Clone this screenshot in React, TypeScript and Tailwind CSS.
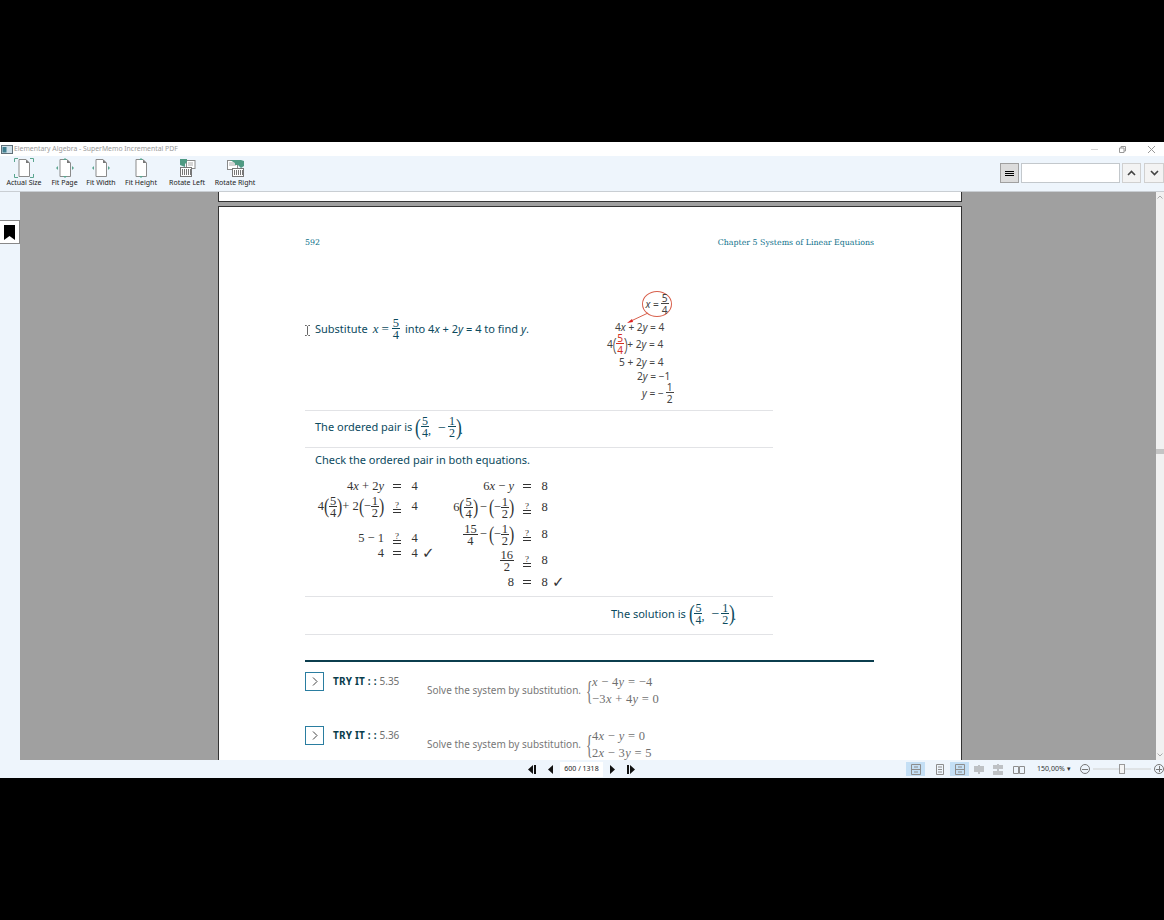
import React from "react";

const serif = "font-['Liberation_Serif',serif]";
const sans = "font-['Noto_Sans',sans-serif]";

function Frac({ n, d, cls = "" }: { n: string; d: string; cls?: string }) {
  return (
    <span className={`inline-flex flex-col items-center align-middle leading-[10px] ${cls}`}>
      <span className="px-[1px]">{n}</span>
      <span className="block h-[1px] w-full bg-current" />
      <span className="px-[1px] pt-[1px]">{d}</span>
    </span>
  );
}

function Paren({ children, h = "text-[21px]" }: { children: React.ReactNode; h?: string }) {
  return (
    <span className="inline-flex items-center">
      <span className={`${h} leading-none font-light scale-x-75 mx-[-1px]`}>(</span>
      {children}
      <span className={`${h} leading-none font-light scale-x-75 mx-[-1px]`}>)</span>
    </span>
  );
}

function PageIcon({ arrows }: { arrows: "all" | "h" | "v" | "corners" }) {
  const g = "#5aa58f";
  return (
    <svg width="22" height="20" viewBox="0 0 22 20">
      <path d="M6 1.500h7l3.500 3.500v13.500H6z" fill="#fff" stroke="#8b8b8b" />
      <path d="M13 1.500V5h3.500z" fill="#777" />
      {arrows === "corners" && (
        <path d="M1.500 4V.5H5M17 .5h3.500V4M1.500 16v3.500H5M17 19.500h3.500V16" fill="none" stroke={g} />
      )}
      {(arrows === "all" || arrows === "v") && <path d="M11 0l2 2H9zM11 20l2-2H9z" fill={g} />}
      {(arrows === "all" || arrows === "h") && <path d="M2 10l2-2v4zM20 10l-2-2v4z" fill={g} />}
    </svg>
  );
}

function RotateLeft() {
  return (
    <svg width="17" height="18" viewBox="0 0 17 18">
      <rect x="7.500" y="1.500" width="8.500" height="8" fill="#fff" stroke="#8a8a8a" />
      <path d="M9 4h5M9 6h5" stroke="#aaa" />
      <path d="M1 0h7v3l-2 2v3L1 6z" fill="#4f9a83" />
      <rect x="1.500" y="8.500" width="11" height="9" fill="#fff" stroke="#777" />
      <path d="M3.500 10v6M5.500 10v6M7.500 10v6M9.500 10v6M11.500 10v6" stroke="#777" />
    </svg>
  );
}

function RotateRight() {
  return (
    <svg width="17" height="18" viewBox="0 0 17 18">
      <rect x=".5" y="1.500" width="10" height="9" fill="#fff" stroke="#8a8a8a" />
      <path d="M2 4h7M2 6h7" stroke="#aaa" />
      <path d="M3 1h11l3 1v5l-3 2-3-3H8V4z" fill="#4f9a83" />
      <rect x="5.500" y="9.500" width="11" height="8" fill="#fff" stroke="#777" />
      <path d="M7.500 11v5M9.500 11v5M11.500 11v5M13.500 11v5M15.500 11v5" stroke="#777" />
    </svg>
  );
}

function Tool({ label, icon, w }: { label: string; icon: React.ReactNode; w: string }) {
  return (
    <div className={`flex flex-col items-center ${w}`}>
      <div className="h-[20px] flex items-center justify-center">{icon}</div>
      <span className="text-[7px] leading-[9px] text-[#222] whitespace-nowrap">{label}</span>
    </div>
  );
}

function StatusIcon({ active, kind, cls = "" }: { active?: boolean; kind: number; cls?: string }) {
  return (
    <div className={`w-[19px] h-[14px] flex items-center justify-center ${active ? "bg-[#c4dff5]" : ""} ${cls}`}>
      <svg width="12" height="11" viewBox="0 0 12 11" fill="none" stroke="#8d8d8d">
        {kind === 0 && <path d="M1.500.5h9v10h-9zM1.500 5.500h9M4 3h4M4 8h4" />}
        {kind === 1 && <path d="M2.500.5h7v10h-7zM4 3h4M4 5.500h4M4 8h4" />}
        {kind === 2 && <path d="M1 5h4M1 3h4M1 7h4M7 3h4M7 5h4M7 7h4M6 1v9" />}
        {kind === 3 && <path d="M1 2h4M1 4h4M7 2h4M7 4h4M1 8h4M1 10h4M7 8h4M7 10h4M6 0v11" />}
        {kind === 4 && <path d="M.5 2.500h5v7h-5zM6.500 2.500h5v7h-5z" />}
      </svg>
    </div>
  );
}

function EqRow({ l, op, r, check, h, w }: { l: React.ReactNode; op: React.ReactNode; r: string; check?: boolean; h: string; w: string }) {
  return (
    <div className={`flex items-center ${h}`}>
      <div className={`${w} flex justify-end items-center whitespace-nowrap`}>{l}</div>
      <div className="w-[26px] flex justify-center">{op}</div>
      <div className="w-[9px] text-center">{r}</div>
      {check && <span className="ml-[3px] text-[15px] font-bold leading-none font-['DejaVu_Sans',sans-serif]">✓</span>}
    </div>
  );
}

const Eq = () => (
  <span className="flex flex-col gap-[2px]">
    <span className="block w-[8px] h-[1px] bg-current" />
    <span className="block w-[8px] h-[1px] bg-current" />
  </span>
);

const Q = () => (
  <span className="inline-flex flex-col items-center">
    <span className="text-[9px] leading-[8px]">?</span>
    <Eq />
  </span>
);

function Pair() {
  return (
    <span className={`${serif} inline-flex items-center text-[12px]`}>
      <Paren h="text-[23px]">
        <Frac n="5" d="4" />
        <span className="ml-[-1px] mr-[7px] self-end">,</span>
        <span className="mr-[2px] text-[14px]">−</span>
        <Frac n="1" d="2" />
      </Paren>
      <span className="ml-[-2px] self-end">.</span>
    </span>
  );
}

function TryIt({ num, a, b, mt }: { num: string; a: React.ReactNode; b: React.ReactNode; mt: string }) {
  return (
    <div className={`flex ${mt}`}>
      <div className="w-[19px] h-[19px] border border-[#2a7da0] flex items-center justify-center shrink-0">
        <svg width="6" height="9" viewBox="0 0 6 9" fill="none" stroke="#444">
          <path d="M1 .5l4 4-4 4" />
        </svg>
      </div>
      <div className={`${sans} ml-[9px] w-[94px] text-[10px] leading-[18px] whitespace-nowrap`}>
        <span className="font-bold text-[#093d4c] tracking-[0.2px]">TRY IT : : </span>
        <span className="text-[#6f6f6f]">{num}</span>
      </div>
      <div className={`${sans} text-[10px] text-[#777] mt-[9px] whitespace-nowrap leading-[18px]`}>
        Solve the system by substitution.
      </div>
      <div className={`${serif} ml-[3px] flex items-center text-[12.5px] tracking-[0.3px] text-[#6f6f6f] h-[36px] mt-[1px]`}>
        <span className="text-[27px] font-thin leading-none scale-x-50 w-[8px]">{"{"}</span>
        <div className="leading-[17.5px] whitespace-nowrap">
          <div>{a}</div>
          <div>{b}</div>
        </div>
      </div>
    </div>
  );
}

export default function App() {
  return (
    <div className={`${sans} w-[1164px] h-[920px] bg-black overflow-hidden flex flex-col`}>
      <div className="h-[142px] shrink-0" />

      {/* Title bar */}
      <div className="h-[14px] shrink-0 bg-white flex items-center pl-[1px]">
        <svg width="12" height="9" viewBox="0 0 12 9">
          <rect x=".5" y=".5" width="11" height="8" fill="#cfe0ea" stroke="#5f6f78" />
          <rect x="1.500" y="2" width="4" height="5.500" fill="#3f7f8f" />
        </svg>
        <span className="ml-[1px] text-[6.85px] text-[#9a9a9a] whitespace-nowrap">
          Elementary Algebra - SuperMemo Incremental PDF
        </span>
        <div className="ml-auto flex items-center">
          <span className="w-[7px] h-[1px] bg-[#d5d5d5] mr-[21px]" />
          <svg width="7" height="7" viewBox="0 0 7 7" fill="none" stroke="#999" className="mr-[21px]">
            <path d="M.5 2h4.500v4.500h-4.500zM2 2V.5h4.500V5H5" />
          </svg>
          <svg width="9" height="9" viewBox="0 0 9 9" stroke="#999" className="mr-[8px]">
            <path d="M1 1l7 7M8 1L1 8" />
          </svg>
        </div>
      </div>

      {/* Toolbar */}
      <div className="h-[36px] shrink-0 bg-[#eef5fc] border-b border-[#c9ced3] flex items-start pt-[2px]">
        <Tool label="Actual Size" w="w-[48px]" icon={<PageIcon arrows="corners" />} />
        <Tool label="Fit Page" w="w-[33px]" icon={<PageIcon arrows="all" />} />
        <Tool label="Fit Width" w="w-[40px]" icon={<PageIcon arrows="h" />} />
        <Tool label="Fit Height" w="w-[40px]" icon={<PageIcon arrows="v" />} />
        <Tool label="Rotate Left" w="w-[40px] ml-[6px]" icon={<RotateLeft />} />
        <Tool label="Rotate Right" w="w-[44px] ml-[6px]" icon={<RotateRight />} />
        <div className="ml-auto flex items-center mt-[5px]">
          <div className="w-[19px] h-[20px] bg-[#dcdcdc] border border-[#a0a0a0] flex flex-col items-center justify-center gap-[1px]">
            <span className="w-[9px] h-[1px] bg-black" />
            <span className="w-[9px] h-[1px] bg-black" />
            <span className="w-[9px] h-[1px] bg-black" />
          </div>
          <div className="w-[99px] h-[20px] ml-[2px] bg-white border border-[#c3c8cc]" />
          <div className="w-[19px] h-[20px] ml-[2px] bg-[#f3f3f3] border border-[#d0d0d0] flex items-center justify-center">
            <svg width="9" height="6" viewBox="0 0 9 6" fill="none" stroke="#444" strokeWidth="1.6"><path d="M1 5l3.500-3.500L8 5" /></svg>
          </div>
          <div className="w-[20px] h-[20px] ml-[3px] bg-[#f3f3f3] border border-[#d0d0d0] flex items-center justify-center">
            <svg width="9" height="6" viewBox="0 0 9 6" fill="none" stroke="#444" strokeWidth="1.6"><path d="M1 1l3.500 3.500L8 1" /></svg>
          </div>
        </div>
      </div>

      {/* Main */}
      <div className="h-[568px] shrink-0 flex overflow-hidden">
        <div className="w-[20px] shrink-0 bg-[#eef5fc] pt-[28px]">
          <div className="w-[20px] h-[24px] bg-white border border-[#888] border-l-0 flex items-center justify-center">
            <svg width="11" height="15" viewBox="0 0 11 15"><path d="M0 0h11v15l-5.500-4L0 15z" fill="#000" /></svg>
          </div>
        </div>
        <div className="flex-1 bg-[#a0a0a0] pl-[198px] overflow-hidden">
          <div className="w-[744px] h-[10px] bg-white border border-t-0 border-[#333]" />
          <div className="w-[744px] h-[600px] mt-[4px] bg-white border border-[#333] pl-[86px] pt-[30px] text-[#0b4a5e]">
            {/* Header */}
            <div className="w-[569px] flex justify-between font-['DejaVu_Serif',serif] text-[7.85px] leading-[11px] text-[#0b6f8a]">
              <span>592</span>
              <span>Chapter 5 Systems of Linear Equations</span>
            </div>

            {/* Step 1 */}
            <div className="relative w-[468px] h-[157px] mt-[6px] border-b border-[#e2e3e6]">
              <svg className="absolute left-0 top-[71px]" width="5" height="11" viewBox="0 0 5 11" fill="none" stroke="#666">
                <path d="M0 .5h1.500L2.500 1.500 3.500.5H5M2.500 1.500v8M0 10.500h1.500l1-1 1 1H5" />
              </svg>
              <div className="absolute left-[10px] top-[64px] flex items-center text-[11px] leading-[20px] whitespace-nowrap">
                <span>Substitute</span>
                <span className={`${serif} italic text-[13px] ml-[5px]`}>x</span>
                <span className={`${serif} text-[13px] mx-[3px]`}>=</span>
                <Frac n="5" d="4" cls={`${serif} text-[12.5px]`} />
                <span className="ml-[5px]">into 4<i>x</i> + 2<i>y</i> = 4 to find <i>y</i>.</span>
              </div>
              <div className="absolute left-[302px] top-[39px] text-[#444] text-[10.2px] leading-[17px] whitespace-nowrap w-[70px] h-[120px]">
                <div className="absolute left-[35px] top-[-2px] w-[30px] h-[26px] rounded-[50%] border border-[#d8604c] flex items-center justify-center gap-[2px]">
                  <span><i>x</i> =</span>
                  <Frac n="5" d="4" />
                </div>
                <svg className="absolute left-[20px] top-[19px]" width="22" height="12" viewBox="0 0 22 12">
                  <path d="M21 1L4 9" stroke="#d8604c" fill="none" />
                  <path d="M0 11l5-4 1 3z" fill="#d22" />
                </svg>
                <div className="absolute left-[8px] top-[26px]">4<i>x</i> + 2<i>y</i> = 4</div>
                <div className="absolute left-0 top-[40px] flex items-center">
                  <span>4</span>
                  <Paren h="text-[19px]">
                    <Frac n="5" d="4" cls="text-[#d32f1f]" />
                  </Paren>
                  <span>+ 2<i>y</i> = 4</span>
                </div>
                <div className="absolute left-[12px] top-[61px]">5 + 2<i>y</i> = 4</div>
                <div className="absolute left-[30px] top-[75px]">2<i>y</i> = −1</div>
                <div className="absolute left-[35px] top-[89px] flex items-center gap-[2px]">
                  <span><i>y</i> = −</span>
                  <Frac n="1" d="2" />
                </div>
              </div>
            </div>

            {/* ordered pair */}
            <div className="w-[468px] h-[37px] border-b border-[#e2e3e6] pl-[10px] pb-[3px] flex items-center text-[11px] whitespace-nowrap">
              <span>The ordered pair is</span>
              <span className="ml-[3px]"><Pair /></span>
            </div>

            {/* Check */}
            <div className="w-[468px] h-[149px] border-b border-[#e2e3e6] pl-[10px] pt-[3px]">
              <div className="text-[11px] leading-[18px]">Check the ordered pair in both equations.</div>
              <div className={`${serif} flex text-[12.5px] text-[#333] mt-[9px]`}>
                <div className="ml-[-8px] w-[130px]">
                  <EqRow w="w-[77px]" h="h-[16px]" l={<span>4<i>x</i> + 2<i>y</i></span>} op={<Eq />} r="4" />
                  <EqRow w="w-[77px]" h="h-[25px]" l={<span className="flex items-center"><span>4</span><Paren><Frac n="5" d="4" /></Paren><span>+ 2</span><Paren><span>−</span><Frac n="1" d="2" /></Paren></span>} op={<Q />} r="4" />
                  <EqRow w="w-[77px]" h="h-[28px] pt-[10px]" l="5 − 1" op={<Q />} r="4" />
                  <EqRow w="w-[77px]" h="h-[12px]" l="4" op={<Eq />} r="4" check />
                </div>
                <div className="ml-[7px]">
                  <EqRow w="w-[70px]" h="h-[16px]" l={<span>6<i>x</i> − <i>y</i></span>} op={<Eq />} r="8" />
                  <EqRow w="w-[70px]" h="h-[27px]" l={<span className="flex items-center"><span>6</span><Paren><Frac n="5" d="4" /></Paren><span className="mx-[2px]">−</span><Paren><span>−</span><Frac n="1" d="2" /></Paren></span>} op={<Q />} r="8" />
                  <EqRow w="w-[70px]" h="h-[27px]" l={<span className="flex items-center"><Frac n="15" d="4" /><span className="mx-[2px]">−</span><Paren><span>−</span><Frac n="1" d="2" /></Paren></span>} op={<Q />} r="8" />
                  <EqRow w="w-[70px]" h="h-[25px]" l={<Frac n="16" d="2" />} op={<Q />} r="8" />
                  <EqRow w="w-[70px]" h="h-[18px]" l="8" op={<Eq />} r="8" check />
                </div>
              </div>
            </div>

            {/* Solution */}
            <div className="w-[468px] h-[38px] border-b border-[#e2e3e6] pr-[37px] pb-[3px] flex items-center justify-end text-[11px] whitespace-nowrap">
              <span>The solution is</span>
              <span className="ml-[3px]"><Pair /></span>
            </div>

            <div className="w-[569px] h-[2px] bg-[#0b3d4d] mt-[25px]" />

            <TryIt mt="mt-[10px]" num="5.35" a={<><i>x</i> − 4<i>y</i> = −4</>} b={<>−3<i>x</i> + 4<i>y</i> = 0</>} />
            <TryIt mt="mt-[17px]" num="5.36" a={<>4<i>x</i> − <i>y</i> = 0</>} b={<>2<i>x</i> − 3<i>y</i> = 5</>} />
          </div>
        </div>
        {/* Scrollbar */}
        <div className="w-[8px] shrink-0 bg-[#f1f1f1] flex flex-col items-center py-[3px]">
          <svg width="6" height="4" viewBox="0 0 6 4" fill="none" stroke="#aaa"><path d="M.5 3.500L3 1l2.500 2.500" /></svg>
          <div className="w-[8px] h-[5px] mt-[250px] bg-[#c4c4c4]" />
          <svg className="mt-auto" width="6" height="4" viewBox="0 0 6 4" fill="none" stroke="#aaa"><path d="M.5.5L3 3 5.500.5" /></svg>
        </div>
      </div>

      {/* Status bar */}
      <div className="h-[18px] shrink-0 bg-[#eef5fc] flex items-center text-[7px] text-[#222]">
        <div className="ml-[528px] flex items-center">
          <svg width="10" height="9" viewBox="0 0 10 9"><path d="M0 4.500L5 0v9zM6 0h2v9H6z" fill="#111" /></svg>
          <svg className="ml-[10px]" width="5" height="9" viewBox="0 0 5 9"><path d="M0 4.500L5 0v9z" fill="#111" /></svg>
          <div className="ml-[7px] w-[43px] h-[15px] bg-white flex items-center justify-center">600 / 1318</div>
          <svg className="ml-[7px]" width="5" height="9" viewBox="0 0 5 9"><path d="M5 4.500L0 0v9z" fill="#111" /></svg>
          <svg className="ml-[12px]" width="10" height="9" viewBox="0 0 10 9"><path d="M0 0h2v9H0zM3 0l5 4.500L3 9z" fill="#111" /></svg>
        </div>
        <div className="ml-auto flex items-center">
          <StatusIcon active kind={0} />
          <StatusIcon kind={1} cls="ml-[5px]" />
          <StatusIcon active kind={0} cls="ml-[1px]" />
          <StatusIcon kind={2} />
          <StatusIcon kind={3} />
          <StatusIcon kind={4} cls="ml-[2px]" />
          <span className="ml-[9px] w-[43px] text-[#333] whitespace-nowrap">150,00% ▾</span>
          <div className="w-[10px] h-[10px] rounded-full border border-[#777] flex items-center justify-center">
            <span className="w-[6px] h-[1px] bg-[#777]" />
          </div>
          <div className="ml-[3px] w-[58px] h-[2px] bg-[#dfe3e6] relative">
            <span className="absolute left-[26px] top-[-4px] w-[6px] h-[10px] bg-[#f4f4f4] border border-[#999]" />
          </div>
          <div className="ml-[3px] w-[10px] h-[10px] rounded-full border border-[#777] flex items-center justify-center relative">
            <span className="w-[6px] h-[1px] bg-[#777]" />
            <span className="absolute w-[1px] h-[6px] bg-[#777]" />
          </div>
        </div>
      </div>
    </div>
  );
}
